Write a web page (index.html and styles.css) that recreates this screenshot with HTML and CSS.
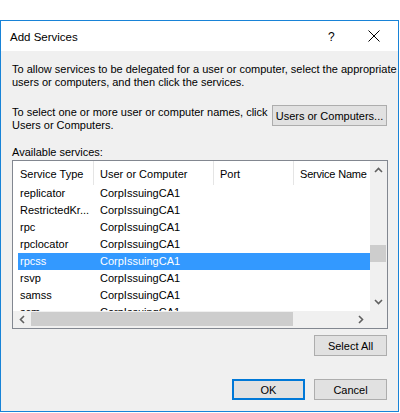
FILE: index.html
```html
<!DOCTYPE html>
<html lang="en">
<head>
  <meta charset="UTF-8">
  <title>Add Services</title>
  <link rel="stylesheet" href="styles.css">
</head>
<body>
  <div class="dialog">
    <div class="titlebar">
      <span class="title">Add Services</span>
      <span class="help">?</span>
      <span class="close">
        <svg width="12" height="12" viewBox="0 0 12 12"><path d="M0.5 0.5 L11.5 11.5 M11.5 0.5 L0.5 11.5" stroke="#000" stroke-width="1" fill="none"/></svg>
      </span>
    </div>

    <div class="content">
      <p class="intro">To allow services to be delegated for a user or computer, select the appropriate<br>users or computers, and then click the services.</p>

      <div class="picker">
        <p>To select one or more user or computer names, click<br>Users or Computers.</p>
        <button class="btn btn-wide">Users or Computers...</button>
      </div>

      <div class="label">Available services:</div>

      <div class="listbox">
        <div class="list-view">
          <div class="list-head">
            <div class="col c1">Service Type</div>
            <div class="col c2">User or Computer</div>
            <div class="col c3">Port</div>
            <div class="col c4">Service Name</div>
          </div>
          <div class="row"><div class="c1">replicator</div><div class="c2">CorpIssuingCA1</div></div>
          <div class="row"><div class="c1">RestrictedKr...</div><div class="c2">CorpIssuingCA1</div></div>
          <div class="row"><div class="c1">rpc</div><div class="c2">CorpIssuingCA1</div></div>
          <div class="row"><div class="c1">rpclocator</div><div class="c2">CorpIssuingCA1</div></div>
          <div class="row selected"><div class="c1">rpcss</div><div class="c2">CorpIssuingCA1</div></div>
          <div class="row"><div class="c1">rsvp</div><div class="c2">CorpIssuingCA1</div></div>
          <div class="row"><div class="c1">samss</div><div class="c2">CorpIssuingCA1</div></div>
          <div class="row"><div class="c1">scm</div><div class="c2">CorpIssuingCA1</div></div>
        </div>

        <div class="vscroll">
          <svg class="arrow" width="9" height="6" viewBox="0 0 9 6"><path d="M1 5 L4.5 1.5 L8 5" stroke="#606060" stroke-width="1.6" fill="none"/></svg>
          <div class="vtrack"><div class="vthumb"></div></div>
          <svg class="arrow" width="9" height="6" viewBox="0 0 9 6"><path d="M1 1 L4.5 4.5 L8 1" stroke="#606060" stroke-width="1.6" fill="none"/></svg>
        </div>

        <div class="hscroll">
          <svg class="arrow" width="6" height="9" viewBox="0 0 6 9"><path d="M5 1 L1.5 4.5 L5 8" stroke="#606060" stroke-width="1.6" fill="none"/></svg>
          <div class="htrack"><div class="hthumb"></div></div>
          <svg class="arrow" width="6" height="9" viewBox="0 0 6 9"><path d="M1 1 L4.5 4.5 L1 8" stroke="#606060" stroke-width="1.6" fill="none"/></svg>
        </div>

        <div class="corner"></div>
      </div>

      <div class="select-row">
        <button class="btn">Select All</button>
      </div>

      <div class="footer">
        <button class="btn btn-default">OK</button>
        <button class="btn">Cancel</button>
      </div>
    </div>
  </div>
</body>
</html>
```

FILE: styles.css
```css
* {
  margin: 0;
  padding: 0;
  box-sizing: border-box;
}

body {
  background: #fff;
  font-family: "Liberation Sans", Arial, sans-serif;
  font-size: 11px;
  color: #000;
}

/* Window frame */
.dialog {
  margin-top: 20px;
  width: 399px;
  height: 392px;
  border: 1px solid #1883d7;
  background: #f0f0f0;
  display: flex;
  flex-direction: column;
  white-space: nowrap;
}

.titlebar {
  height: 30px;
  background: #fff;
  display: flex;
  align-items: center;
  padding-left: 9px;
}

.title {
  flex: 1;
  font-size: 11.5px;
  padding-top: 2px;
}

.help {
  width: 24px;
  font-size: 12px;
  padding-top: 1px;
}

.close {
  width: 46px;
  display: flex;
  justify-content: center;
  padding-right: 2px;
}

/* Body */
.content {
  flex: 1;
  padding: 12px 11px 0 11px;
  line-height: 13px;
}

.intro {
  margin-bottom: 16px;
}

.picker {
  display: flex;
  justify-content: space-between;
  align-items: flex-start;
}

.picker p {
  padding-top: 1px;
}

.btn {
  font-family: inherit;
  font-size: 11px;
  color: #000;
  background: #e1e1e1;
  border: 1px solid #adadad;
  width: 73px;
  height: 21px;
}

.btn-wide {
  width: 115px;
}

.btn-default {
  border: 2px solid #0078d7;
}

.label {
  margin-top: 14px;
  height: 14px;
}

/* Service list */
.listbox {
  width: 376px;
  height: 169px;
  border: 1px solid #828790;
  background: #fff;
  display: grid;
  grid-template-columns: 357px 17px;
  grid-template-rows: 150px 17px;
}

.list-view {
  overflow: hidden;
}

.list-head {
  display: flex;
  height: 24px;
}

.list-head .col {
  flex-shrink: 0;
  padding: 7px 0 0 6px;
  border-right: 1px solid #e5e5e5;
}

.list-head .c4 {
  letter-spacing: -0.2px;
}

.c1 { width: 81px; }
.c2 { width: 120px; }
.c3 { width: 80px; }
.c4 { width: 90px; }

.list-head .c1 { padding-left: 7px; }

.row {
  display: flex;
  height: 17px;
  margin-left: 5px;
  padding-top: 2px;
}

.row > div {
  flex-shrink: 0;
}

.row .c1 {
  width: 76px;
  padding-left: 2px;
}

.row .c2 {
  padding-left: 6px;
}

.row.selected {
  background: #3399ff;
  color: #fff;
}

/* Scroll bars */
.vscroll {
  background: #f0f0f0;
  display: flex;
  flex-direction: column;
  align-items: center;
}

.vscroll .arrow {
  margin: 6px 0;
}

.vtrack {
  flex: 1;
  width: 100%;
  position: relative;
}

.vthumb {
  position: absolute;
  left: 0;
  right: 1px;
  top: 66px;
  height: 17px;
  background: #cdcdcd;
}

.hscroll {
  background: #f0f0f0;
  display: flex;
  align-items: center;
}

.hscroll .arrow {
  margin: 0 6px;
}

.htrack {
  flex: 1;
  height: 100%;
  padding: 1px 0 2px;
}

.hthumb {
  width: 262px;
  height: 100%;
  background: #cdcdcd;
}

.corner {
  background: #f0f0f0;
}

/* Buttons below the list */
.select-row {
  display: flex;
  justify-content: flex-end;
  margin-top: 6px;
}

.footer {
  display: flex;
  justify-content: flex-end;
  gap: 9px;
  margin-top: 23px;
}
```
